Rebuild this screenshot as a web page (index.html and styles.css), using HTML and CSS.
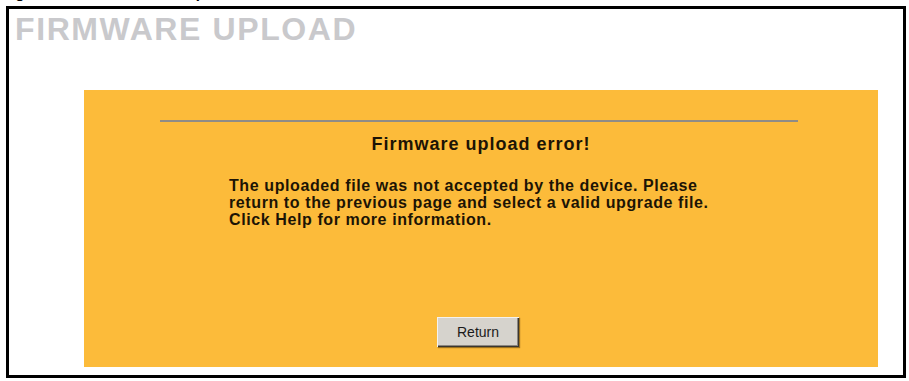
FILE: index.html
```html
<!DOCTYPE html>
<html>
<head>
<meta charset="utf-8">
<title>Firmware Upload</title>
<link rel="stylesheet" href="styles.css">
</head>
<body>
<div class="caption"><div class="caption-text"><span class="fig-num">Figure 63</span>Firmware Upload Error</div></div>
<div class="frame">
  <h1 class="page-title">FIRMWARE UPLOAD</h1>
  <div class="panel">
    <hr class="rule">
    <h2 class="error-title">Firmware upload error!</h2>
    <p class="message">The uploaded file was not accepted by the device. Please<br>return to the previous page and select a valid upgrade file.<br>Click Help for more information.</p>
    <div class="actions"><button class="btn" type="button">Return</button></div>
  </div>
</div>
</body>
</html>
```
FILE: styles.css
```css
html, body {
  margin: 0;
  padding: 0;
  background: #ffffff;
  font-family: "Liberation Sans", Arial, sans-serif;
  overflow: hidden;
}

.caption {
  height: 6px;
  overflow: hidden;
}

.caption-text {
  margin-top: -14px;
  padding-left: 2px;
  font-size: 15px;
  line-height: 14px;
  font-weight: bold;
  color: #000;
  white-space: nowrap;
}

.fig-num {
  display: inline-block;
  width: 112px;
}

.frame {
  margin: 0 3px 0 6px;
  border: 3px solid #000;
  height: 372px;
  box-sizing: border-box;
  padding: 6px 25px 0 6px;
}

.page-title {
  margin: 0;
  font-size: 32px;
  line-height: 28px;
  font-weight: bold;
  letter-spacing: 1.6px;
  color: #c9c9cc;
}

.panel {
  margin: 47px 0 0 69px;
  background: #fcbb3a;
  height: 277px;
  box-sizing: border-box;
  padding-top: 30px;
  display: flex;
  flex-direction: column;
}

.rule {
  margin: 0 0 0 76px;
  width: 638px;
  height: 0;
  border: 0;
  border-top: 2px solid #8f8c86;
}

.error-title {
  margin: 11px 0 0 0;
  text-align: center;
  font-size: 18px;
  line-height: 22px;
  font-weight: bold;
  letter-spacing: 1px;
  color: #1c1405;
}

.message {
  margin: 22px 0 0 145px;
  font-size: 16px;
  line-height: 17px;
  font-weight: bold;
  letter-spacing: 0.6px;
  color: #1c1405;
}

.actions {
  margin-top: auto;
  padding-bottom: 20px;
  display: flex;
  justify-content: center;
  padding-right: 6px;
}

.btn {
  width: 82px;
  height: 30px;
  background: #d6d3cd;
  border: 0;
  box-shadow: inset 1px 1px 0 #f4f2ee, inset -1px -1px 0 #3a3630, inset -2px -2px 0 #8a8680, 1px 1px 1px rgba(60, 40, 0, 0.5);
  font-family: "Liberation Sans", Arial, sans-serif;
  font-size: 14px;
  color: #1a1a1a;
  padding: 0;
}
```
